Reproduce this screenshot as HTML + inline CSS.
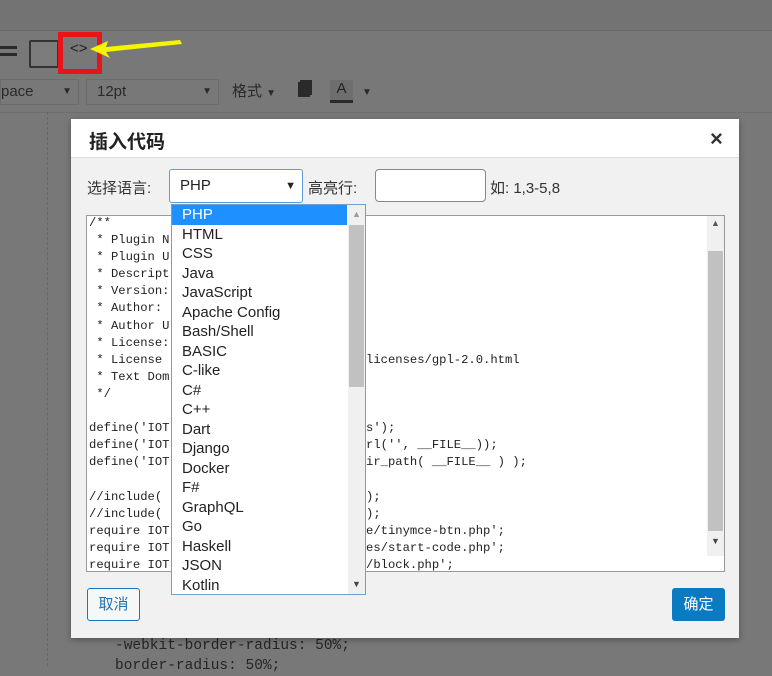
<!DOCTYPE html>
<html><head><meta charset="utf-8"><style>
*{box-sizing:border-box;margin:0;padding:0}
body{width:772px;height:666px;overflow:hidden;background:#787878;font-family:"Liberation Sans","Noto Sans CJK SC",sans-serif;position:relative}
.a{position:absolute}
.mono{font-family:"Liberation Mono",monospace;font-size:12.2px;color:#222;line-height:17.1px;white-space:pre}
.li{height:19.5px;line-height:19.5px;font-size:15px;color:#222;padding-left:10px}
</style></head><body>
<div class="a" style="left:0;top:0;width:772px;height:31px;background:#737373;border-bottom:1px solid #6a6a6a"></div>
<div class="a" style="left:0;top:46px;width:17px;height:3px;background:#2a2a2a"></div>
<div class="a" style="left:0;top:53px;width:17px;height:3px;background:#2a2a2a"></div>
<div class="a" style="left:29px;top:40px;width:30px;height:28px;border:2px solid #333;border-radius:2px;background:#7c7c7c"></div>
<div class="a" style="left:58px;top:32px;width:44px;height:42px;border:5px solid #e8141c"></div>
<div class="a" style="left:70px;top:40px;font-size:15px;color:#222">&lt;&gt;</div>
<svg class="a" style="left:88px;top:36px" width="95" height="26"><polygon points="92,4 94,8 18,16 22,22 2,13 20,5 18,11" fill="#f5f500"/></svg>
<div class="a" style="left:0;top:79px;width:79px;height:26px;border:1px solid #6c6c6c;font-size:15px;color:#2a2a2a;line-height:24px">pace<span style="position:absolute;right:6px;font-size:10px">▼</span></div>
<div class="a" style="left:86px;top:79px;width:133px;height:26px;border:1px solid #6c6c6c;font-size:15px;color:#2a2a2a;line-height:24px;padding-left:10px">12pt<span style="position:absolute;right:6px;font-size:10px">▼</span></div>
<div class="a" style="left:232px;top:80px;font-size:15px;color:#2a2a2a">格式 <span style="font-size:10px">▼</span></div>
<div class="a" style="left:298px;top:82px;width:12px;height:15px;background:#2a2a2a;box-shadow:2px -2px 0 #2a2a2a"></div>
<div class="a" style="left:330px;top:80px;width:23px;height:23px;background:#6e6e6e;border-bottom:3px solid #2a2a2a;font-size:15px;text-align:center;color:#222">A</div>
<div class="a" style="left:362px;top:87px;font-size:10px;color:#2a2a2a">▼</div>
<div class="a" style="left:0;top:112px;width:772px;height:1px;background:#6e6e6e"></div>
<div class="a" style="left:47px;top:112px;height:554px;border-left:1px dashed #666"></div>
<div class="a mono" style="left:115px;top:636px;font-size:14.5px;color:#252525;line-height:20px">-webkit-border-radius: 50%;
border-radius: 50%;</div>

<div class="a" style="left:71px;top:119px;width:668px;height:519px;background:#f1f1f1;box-shadow:0 2px 6px rgba(0,0,0,.3)">
 <div class="a" style="left:0;top:0;width:668px;height:39px;background:#fff;border-bottom:1px solid #ddd"></div>
 <div class="a" style="left:18px;top:8px;font-size:19px;font-weight:bold;color:#222">插入代码</div>
 <div class="a" style="left:639px;top:7px;font-size:22px;font-weight:bold;color:#333">×</div>
 <div class="a" style="left:16px;top:58px;font-size:15px;color:#333">选择语言:</div>
 <div class="a" style="left:98px;top:50px;width:134px;height:34px;background:#fff;border:1px solid #5b9dd9;border-radius:3px;font-size:15px;line-height:32px;padding-left:10px;color:#222">PHP<span style="position:absolute;right:6px;font-size:11px">▼</span></div>
 <div class="a" style="left:237px;top:58px;font-size:15px;color:#333">高亮行:</div>
 <div class="a" style="left:304px;top:50px;width:111px;height:33px;background:#fff;border:1px solid #888;border-radius:4px"></div>
 <div class="a" style="left:419px;top:58px;font-size:15px;color:#333">如: 1,3-5,8</div>
 <div class="a" style="left:15px;top:96px;width:639px;height:357px;background:#fff;border:1px solid #999;overflow:hidden">
  <div class="a mono" style="left:2px;top:-1px">/**
 * Plugin N
 * Plugin U
 * Descript
 * Version:
 * Author:
 * Author U
 * License:
 * License
 * Text Dom
 */

define('IOT
define('IOT
define('IOT

//include(
//include(
require IOT
require IOT
require IOT</div>
  <div class="a mono" style="left:279px;top:-1px">







licenses/gpl-2.0.html



s');
rl('', __FILE__));
ir_path( __FILE__ ) );

);
);
e/tinymce-btn.php';
es/start-code.php';
/block.php';</div>
  <div class="a" style="left:620px;top:0;width:17px;height:340px;background:#f0f0f0"></div>
  <div class="a" style="left:621px;top:35px;width:15px;height:280px;background:#c1c1c1"></div>
  <div class="a" style="left:624px;top:2px;font-size:9px;color:#555">▲</div>
  <div class="a" style="left:624px;top:320px;font-size:9px;color:#444">▼</div>
 </div>
 <div class="a" style="left:16px;top:469px;width:53px;height:33px;border:1px solid #2271b1;border-radius:3px;background:#f6f7f7;color:#2271b1;font-size:15px;text-align:center;line-height:31px">取消</div>
 <div class="a" style="left:601px;top:469px;width:53px;height:33px;border-radius:3px;background:#0a7bc0;color:#fff;font-size:15px;text-align:center;line-height:33px">确定</div>
</div>

<div class="a" style="left:171px;top:204px;width:195px;height:391px;background:#fff;border:1px solid #7a9cc8">
 <div class="a" style="left:0;top:0;width:175px">
  <div class="li" style="background:#1e90ff;color:#fff">PHP</div>
  <div class="li">HTML</div><div class="li">CSS</div><div class="li">Java</div><div class="li">JavaScript</div><div class="li">Apache Config</div><div class="li">Bash/Shell</div><div class="li">BASIC</div><div class="li">C-like</div><div class="li">C#</div><div class="li">C++</div><div class="li">Dart</div><div class="li">Django</div><div class="li">Docker</div><div class="li">F#</div><div class="li">GraphQL</div><div class="li">Go</div><div class="li">Haskell</div><div class="li">JSON</div><div class="li">Kotlin</div>
 </div>
 <div class="a" style="left:176px;top:0;width:17px;height:389px;background:#f0f0f0"></div>
 <div class="a" style="left:177px;top:20px;width:15px;height:162px;background:#c1c1c1"></div>
 <div class="a" style="left:180px;top:4px;font-size:9px;color:#999">▲</div>
 <div class="a" style="left:180px;top:374px;font-size:9px;color:#444">▼</div>
</div>
</body></html>
